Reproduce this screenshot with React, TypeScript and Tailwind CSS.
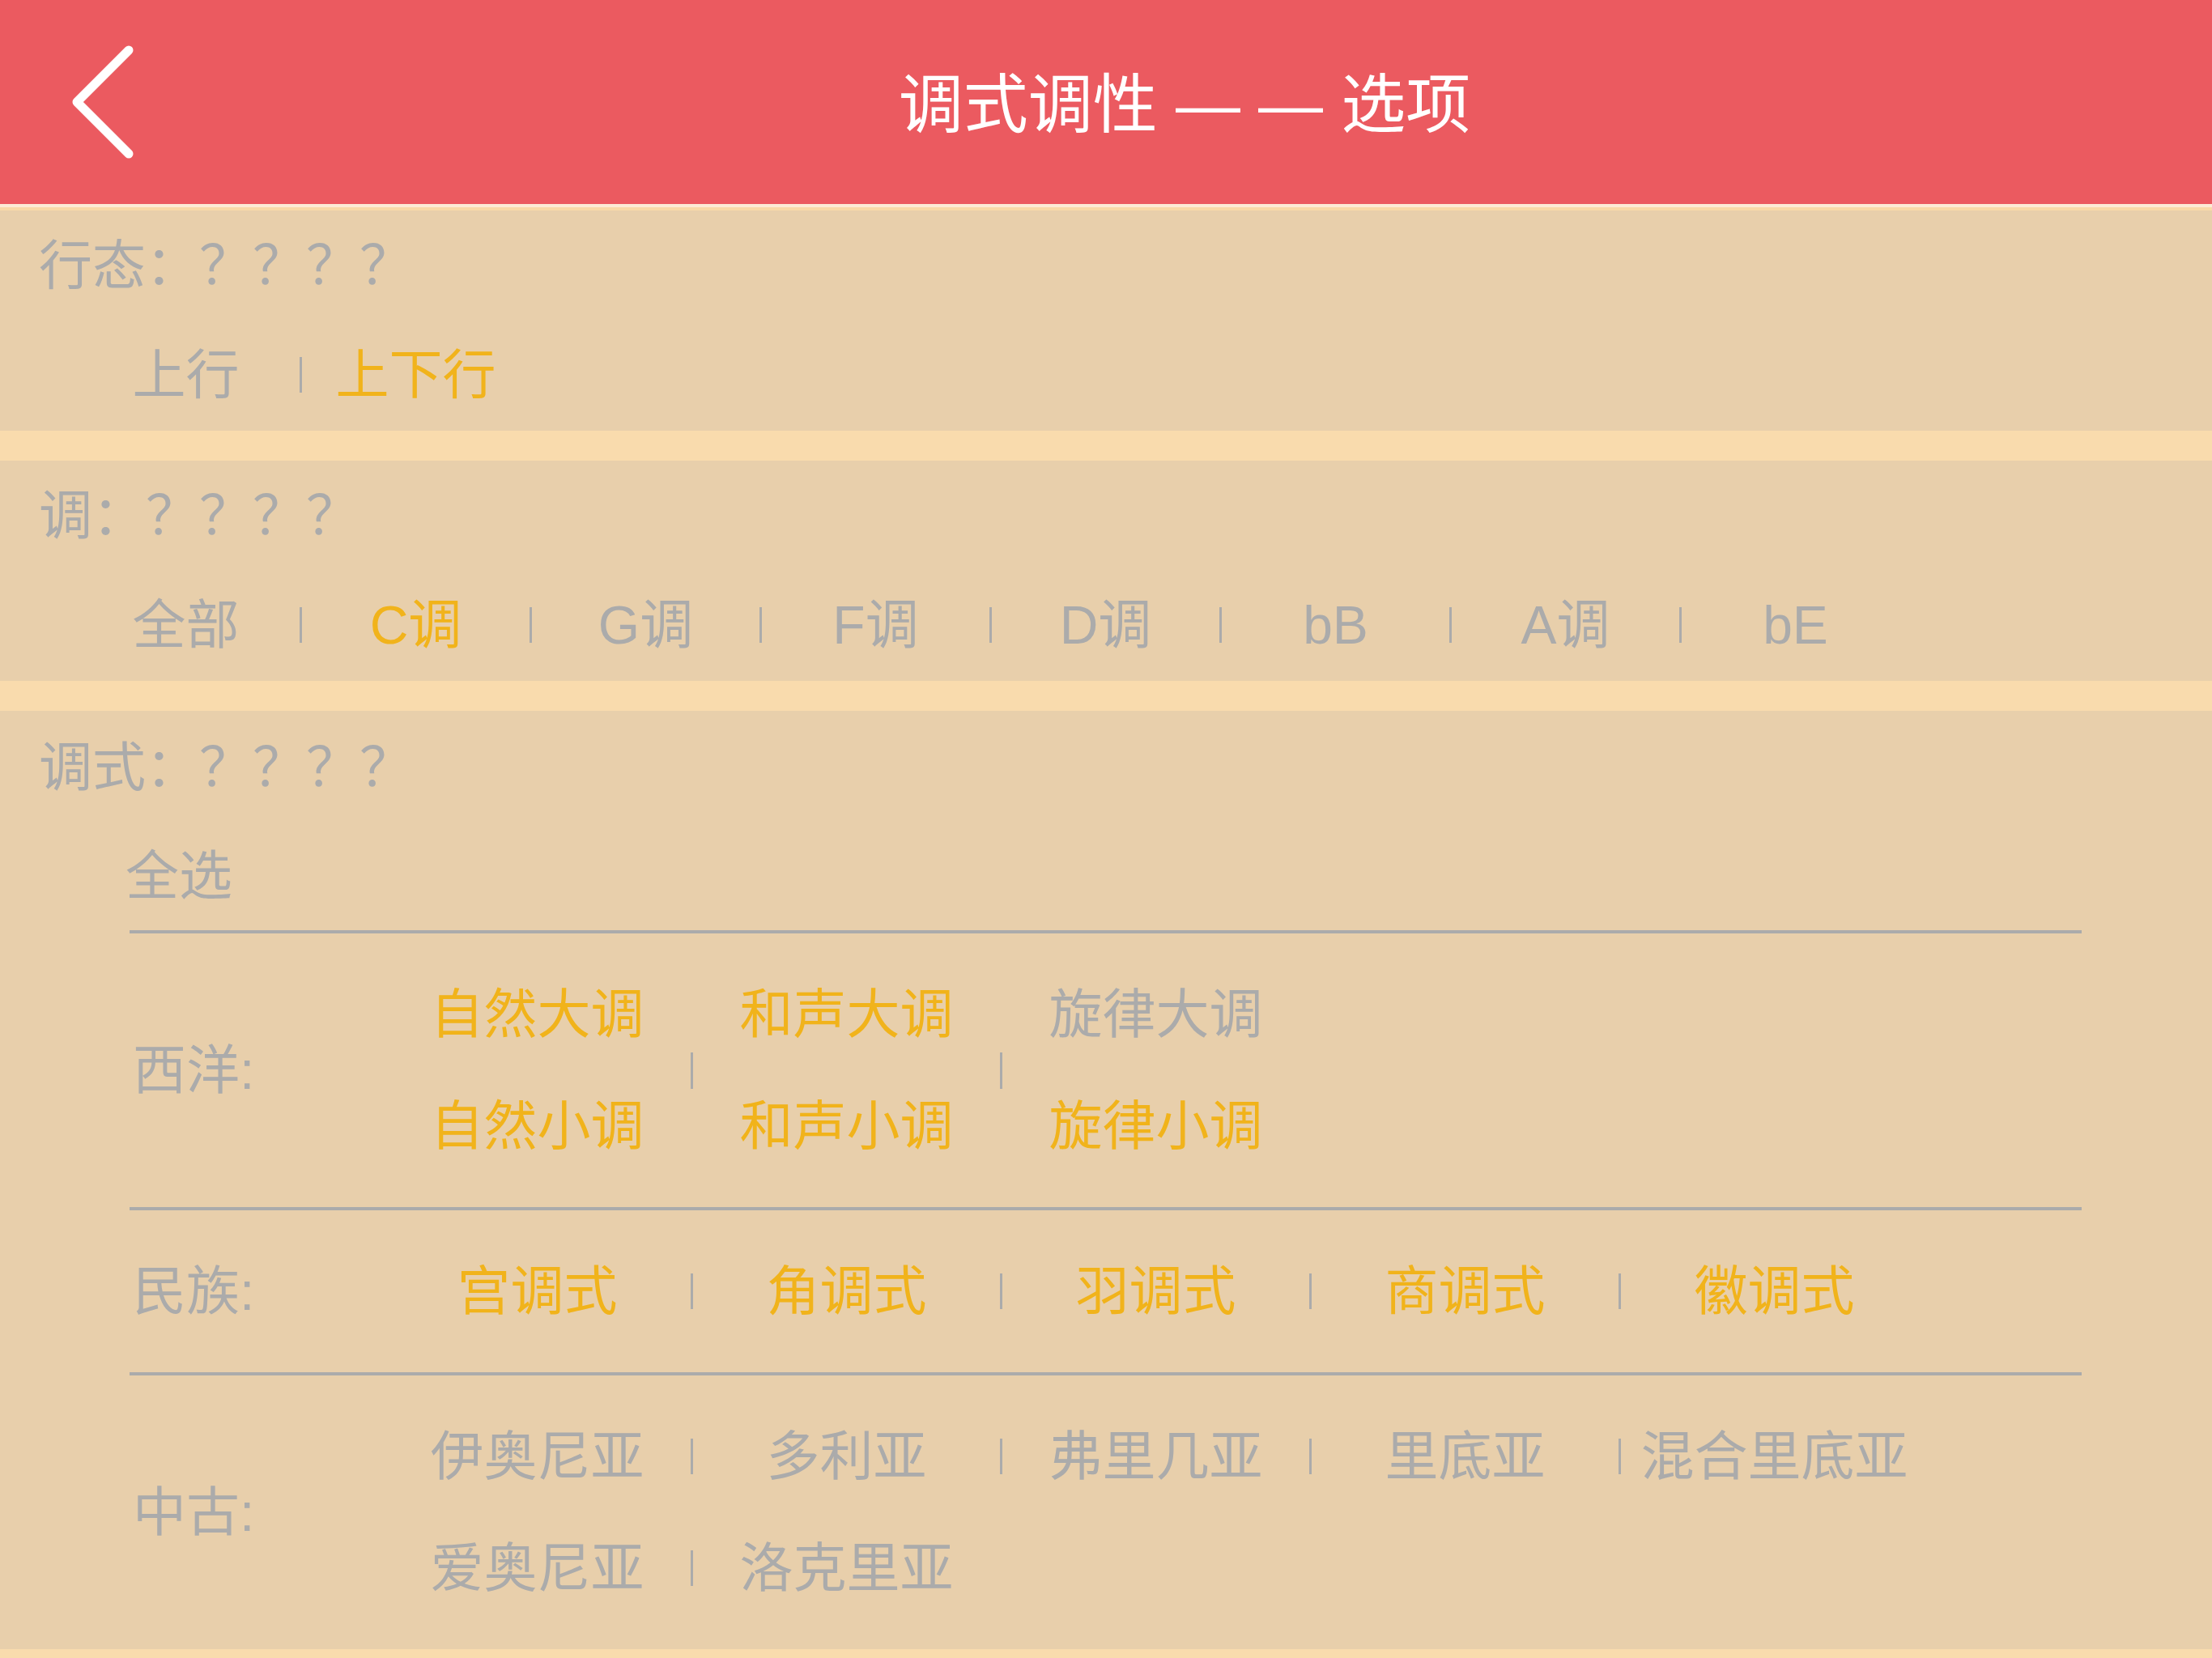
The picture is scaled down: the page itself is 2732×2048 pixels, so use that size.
import React from "react";

const GREY = "text-[#ABABAB]";
const ORANGE = "text-[#F1B31B]";

type Item = { label: string; on?: boolean };

function Sep({ tall = false }: { tall?: boolean }) {
  return <div className={tall ? "w-[3px] h-[45px] bg-[#ABABAB] shrink-0" : "w-[3px] h-[44px] bg-[#ABABAB] shrink-0"} />;
}

// top rows: 上行 / 全部 ... cells of 281px
function TopRow({ items }: { items: Item[] }) {
  return (
    <div className="flex items-center pl-[89px]">
      {items.map((it, i) => (
        <React.Fragment key={it.label}>
          {i > 0 && <Sep />}
          <div className={`w-[281px] text-center whitespace-nowrap ${it.on ? ORANGE : GREY}`}>{it.label}</div>
        </React.Fragment>
      ))}
    </div>
  );
}

// rows inside 调式 groups: cells of 379px
function ModeRow({ items }: { items: Item[] }) {
  return (
    <div className="flex items-center">
      {items.map((it, i) => (
        <React.Fragment key={it.label}>
          {i > 0 && <Sep />}
          <div className={`w-[379px] text-center whitespace-nowrap ${it.on ? ORANGE : GREY}`}>{it.label}</div>
        </React.Fragment>
      ))}
    </div>
  );
}

function Group({ label, children }: { label: string; children: React.ReactNode }) {
  return (
    <div className="ml-[160px] w-[2411px] flex items-center py-[67px]">
      <div className={`w-[314px] pl-[4px] ${GREY}`}>{label}</div>
      {children}
    </div>
  );
}

function Rule() {
  return <div className="ml-[160px] w-[2411px] h-[4px] bg-[#ABABAB]" />;
}

export default function App() {
  const western = [
    [{ label: "自然大调", on: true }, { label: "自然小调", on: true }],
    [{ label: "和声大调", on: true }, { label: "和声小调", on: true }],
    [{ label: "旋律大调" }, { label: "旋律小调", on: true }],
  ];

  return (
    <div className="w-[2732px] h-[2048px] overflow-hidden bg-[#F9DBAD] font-['Liberation_Sans','Noto_Sans_CJK_SC',sans-serif] text-[66px] leading-none">
      {/* header */}
      <header className="h-[252px] bg-[#EB5A60] flex items-center">
        <div className="w-[194px] h-full flex items-center">
          <svg width="194" height="252" viewBox="0 0 194 252" fill="none">
            <path d="M159 62 L95 126 L159 190" stroke="#FFFFFF" strokeWidth="11" strokeLinecap="round" strokeLinejoin="round" />
          </svg>
        </div>
        <div className="flex-1 flex justify-center pt-[8px]">
          <h1 className="text-[80px] leading-none text-white font-normal whitespace-pre">调式调性 — — 选项</h1>
        </div>
      </header>
      <div className="h-[4px] bg-[#FDEBD6]" />
      <div className="h-[4px] bg-[#F9DAA8]" />

      {/* 行态 */}
      <section className="bg-[#E8CFAB] pt-[35px] pb-[36px] flex flex-col gap-[69px]">
        <div className={`pl-[48px] ${GREY}`}>行态：？？？？</div>
        <TopRow items={[{ label: "上行" }, { label: "上下行", on: true }]} />
      </section>
      <div className="h-[37px] bg-[#F9DBAD]" />

      {/* 调 */}
      <section className="bg-[#E8CFAB] pt-[35px] pb-[36px] flex flex-col gap-[69px]">
        <div className={`pl-[48px] ${GREY}`}>调：？？？？</div>
        <TopRow
          items={[
            { label: "全部" },
            { label: "C调", on: true },
            { label: "G调" },
            { label: "F调" },
            { label: "D调" },
            { label: "bB" },
            { label: "A调" },
            { label: "bE" },
          ]}
        />
      </section>
      <div className="h-[37px] bg-[#F9DBAD]" />

      {/* 调式 */}
      <section className="bg-[#E8CFAB] pt-[37px]">
        <div className={`pl-[48px] ${GREY}`}>调式：？？？？</div>
        <div className={`pl-[155px] mt-[68px] mb-[34px] ${GREY}`}>全选</div>
        <Rule />

        <Group label="西洋:">
          <div className="flex items-center">
            {western.map((col, i) => (
              <React.Fragment key={i}>
                {i > 0 && <Sep tall />}
                <div className="w-[379px] flex flex-col items-center gap-[72px]">
                  {col.map((it) => (
                    <div key={it.label} className={`whitespace-nowrap ${it.on ? ORANGE : GREY}`}>{it.label}</div>
                  ))}
                </div>
              </React.Fragment>
            ))}
          </div>
        </Group>
        <Rule />

        <Group label="民族:">
          <ModeRow
            items={[
              { label: "宫调式", on: true },
              { label: "角调式", on: true },
              { label: "羽调式", on: true },
              { label: "商调式", on: true },
              { label: "徽调式", on: true },
            ]}
          />
        </Group>
        <Rule />

        <Group label="中古:">
          <div className="flex flex-col gap-[72px]">
            <ModeRow
              items={[
                { label: "伊奥尼亚" },
                { label: "多利亚" },
                { label: "弗里几亚" },
                { label: "里底亚" },
                { label: "混合里底亚" },
              ]}
            />
            <ModeRow items={[{ label: "爱奥尼亚" }, { label: "洛克里亚" }]} />
          </div>
        </Group>
      </section>
    </div>
  );
}
